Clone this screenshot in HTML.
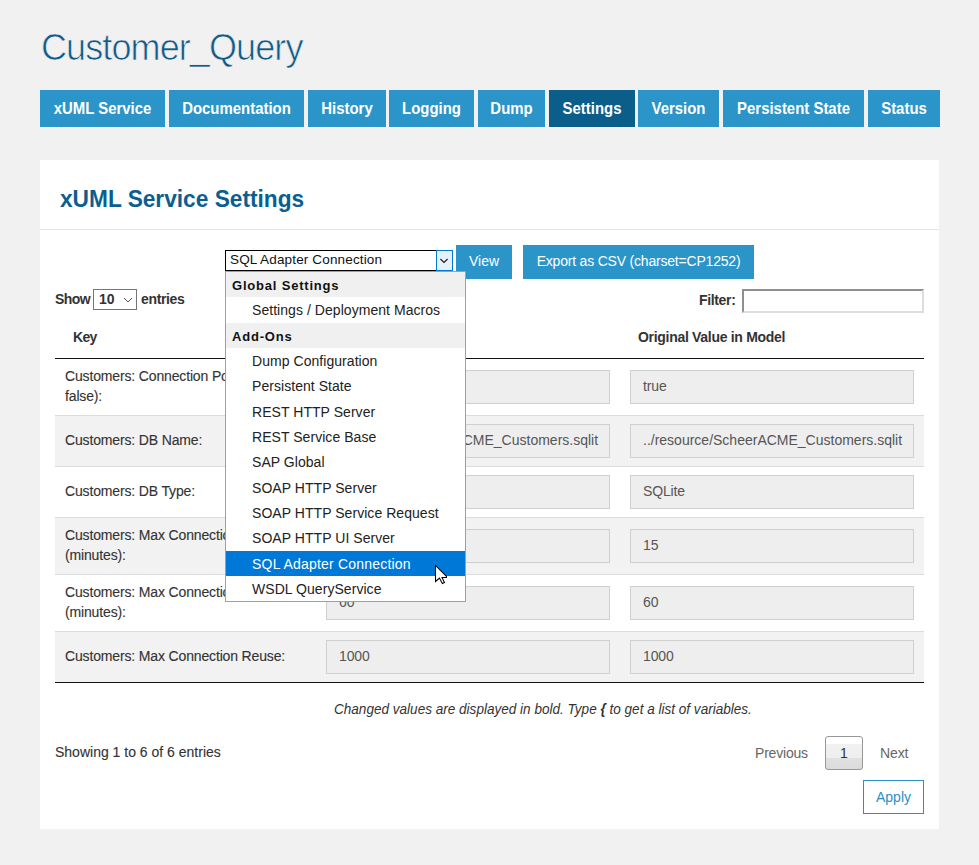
<!DOCTYPE html><html><head><meta charset="utf-8"><style>
html,body{margin:0;padding:0;}
body{width:979px;height:865px;background:#f1f1f1;position:relative;overflow:hidden;font-family:"Liberation Sans",sans-serif;}
.t{position:absolute;white-space:nowrap;}
.e{-webkit-text-stroke:0.12px currentColor;}
.r{position:absolute;box-sizing:border-box;}
</style></head><body>
<div class="t " style="left:41px;top:29.52px;font-size:36px;line-height:36px;font-weight:normal;color:#105b88;font-style:normal;letter-spacing:-0.9px;-webkit-text-stroke:0.7px #f1f1f1;paint-order:normal;">Customer_Query</div>
<div class="r" style="left:40px;top:90px;width:125px;height:37px;background:#2b94c9;"></div>
<div class="t " style="left:40px;top:100.03px;font-size:16.5px;line-height:16.5px;font-weight:bold;color:#fff;font-style:normal;width:125px;text-align:center;transform:scaleX(0.905);transform-origin:center top;">xUML Service</div>
<div class="r" style="left:169px;top:90px;width:135px;height:37px;background:#2b94c9;"></div>
<div class="t " style="left:169px;top:100.03px;font-size:16.5px;line-height:16.5px;font-weight:bold;color:#fff;font-style:normal;width:135px;text-align:center;transform:scaleX(0.905);transform-origin:center top;">Documentation</div>
<div class="r" style="left:308px;top:90px;width:78px;height:37px;background:#2b94c9;"></div>
<div class="t " style="left:308px;top:100.03px;font-size:16.5px;line-height:16.5px;font-weight:bold;color:#fff;font-style:normal;width:78px;text-align:center;transform:scaleX(0.905);transform-origin:center top;">History</div>
<div class="r" style="left:389px;top:90px;width:85px;height:37px;background:#2b94c9;"></div>
<div class="t " style="left:389px;top:100.03px;font-size:16.5px;line-height:16.5px;font-weight:bold;color:#fff;font-style:normal;width:85px;text-align:center;transform:scaleX(0.905);transform-origin:center top;">Logging</div>
<div class="r" style="left:478px;top:90px;width:67px;height:37px;background:#2b94c9;"></div>
<div class="t " style="left:478px;top:100.03px;font-size:16.5px;line-height:16.5px;font-weight:bold;color:#fff;font-style:normal;width:67px;text-align:center;transform:scaleX(0.905);transform-origin:center top;">Dump</div>
<div class="r" style="left:549px;top:90px;width:86px;height:37px;background:#0b5e8a;"></div>
<div class="t " style="left:549px;top:100.03px;font-size:16.5px;line-height:16.5px;font-weight:bold;color:#fff;font-style:normal;width:86px;text-align:center;transform:scaleX(0.905);transform-origin:center top;">Settings</div>
<div class="r" style="left:638px;top:90px;width:81px;height:37px;background:#2b94c9;"></div>
<div class="t " style="left:638px;top:100.03px;font-size:16.5px;line-height:16.5px;font-weight:bold;color:#fff;font-style:normal;width:81px;text-align:center;transform:scaleX(0.905);transform-origin:center top;">Version</div>
<div class="r" style="left:723px;top:90px;width:141px;height:37px;background:#2b94c9;"></div>
<div class="t " style="left:723px;top:100.03px;font-size:16.5px;line-height:16.5px;font-weight:bold;color:#fff;font-style:normal;width:141px;text-align:center;transform:scaleX(0.905);transform-origin:center top;">Persistent State</div>
<div class="r" style="left:868px;top:90px;width:72px;height:37px;background:#2b94c9;"></div>
<div class="t " style="left:868px;top:100.03px;font-size:16.5px;line-height:16.5px;font-weight:bold;color:#fff;font-style:normal;width:72px;text-align:center;transform:scaleX(0.905);transform-origin:center top;">Status</div>
<div class="r" style="left:40px;top:160px;width:899px;height:669px;background:#fff;"></div>
<div class="t " style="left:60px;top:187.38px;font-size:24px;line-height:24px;font-weight:bold;color:#0b5f8f;font-style:normal;transform:scaleX(0.945);transform-origin:left top;">xUML Service Settings</div>
<div class="r" style="left:40px;top:229px;width:899px;height:1px;background:#e3e3e3;"></div>
<div class="r" style="left:456px;top:245px;width:56px;height:34px;background:#2b94c9;"></div>
<div class="t " style="left:456px;top:254.15px;font-size:14px;line-height:14px;font-weight:normal;color:#fff;font-style:normal;width:56px;text-align:center;">View</div>
<div class="r" style="left:523px;top:245px;width:231px;height:34px;background:#2b94c9;"></div>
<div class="t " style="left:523px;top:254.15px;font-size:14px;line-height:14px;font-weight:normal;color:#fff;font-style:normal;letter-spacing:-0.2px;width:231px;text-align:center;">Export as CSV (charset=CP1252)</div>
<div class="t " style="left:55px;top:292.15px;font-size:14px;line-height:14px;font-weight:bold;color:#333;font-style:normal;letter-spacing:-0.6px;">Show</div>
<div class="r" style="left:93px;top:289px;width:44px;height:21px;border:1px solid #767676;background:#fff;"></div>
<div class="t " style="left:99px;top:292.15px;font-size:14px;line-height:14px;font-weight:bold;color:#333;font-style:normal;">10</div>
<svg class="r" style="left:123px;top:297px;width:10px;height:6px;" viewBox="0 0 10 6"><path d="M1 1 L5 5 L9 1" fill="none" stroke="#555" stroke-width="1"/></svg>
<div class="t " style="left:141px;top:292.15px;font-size:14px;line-height:14px;font-weight:bold;color:#333;font-style:normal;letter-spacing:-0.35px;">entries</div>
<div class="t " style="left:699px;top:293.15px;font-size:14px;line-height:14px;font-weight:bold;color:#333;font-style:normal;letter-spacing:-0.35px;">Filter:</div>
<div class="r" style="left:742px;top:289px;width:182px;height:24px;border:2px solid;border-color:#8f8f8f #dddddd #dddddd #8f8f8f;background:#fff;"></div>
<div class="t " style="left:73px;top:329.65px;font-size:14px;line-height:14px;font-weight:bold;color:#333;font-style:normal;letter-spacing:-0.7px;">Key</div>
<div class="t " style="left:334px;top:329.65px;font-size:14px;line-height:14px;font-weight:bold;color:#333;font-style:normal;">Value</div>
<div class="t " style="left:638px;top:329.65px;font-size:14px;line-height:14px;font-weight:bold;color:#333;font-style:normal;letter-spacing:-0.3px;">Original Value in Model</div>
<div class="r" style="left:55px;top:358px;width:869px;height:1px;background:#111;"></div>
<div class="t e" style="left:65px;top:369.15px;font-size:14px;line-height:14px;font-weight:normal;color:#333;font-style:normal;letter-spacing:-0.15px;">Customers: Connection Pooling (true/</div>
<div class="t e" style="left:65px;top:389.15px;font-size:14px;line-height:14px;font-weight:normal;color:#333;font-style:normal;letter-spacing:-0.15px;">false):</div>
<div class="r" style="left:326px;top:370px;width:284px;height:34px;background:#eee;border:1px solid #cfcfcf;"></div>
<div class="t " style="left:339px;top:379.15px;font-size:14px;line-height:14px;font-weight:normal;color:#555;font-style:normal;letter-spacing:-0.15px;">true</div>
<div class="r" style="left:630px;top:370px;width:284px;height:34px;background:#eee;border:1px solid #cfcfcf;"></div>
<div class="t " style="left:643px;top:379.15px;font-size:14px;line-height:14px;font-weight:normal;color:#555;font-style:normal;letter-spacing:-0.15px;">true</div>
<div class="r" style="left:55px;top:415px;width:869px;height:51px;background:#f2f2f2;"></div>
<div class="r" style="left:55px;top:415px;width:869px;height:1px;background:#dcdcdc;"></div>
<div class="t e" style="left:65px;top:433.15px;font-size:14px;line-height:14px;font-weight:normal;color:#333;font-style:normal;letter-spacing:-0.15px;">Customers: DB Name:</div>
<div class="r" style="left:326px;top:424px;width:284px;height:34px;background:#eee;border:1px solid #cfcfcf;"></div>
<div class="t " style="left:339px;top:433.15px;font-size:14px;line-height:14px;font-weight:normal;color:#555;font-style:normal;">../resource/ScheerACME_Customers.sqlit</div>
<div class="r" style="left:630px;top:424px;width:284px;height:34px;background:#eee;border:1px solid #cfcfcf;"></div>
<div class="t " style="left:643px;top:433.15px;font-size:14px;line-height:14px;font-weight:normal;color:#555;font-style:normal;">../resource/ScheerACME_Customers.sqlit</div>
<div class="r" style="left:55px;top:466px;width:869px;height:1px;background:#dcdcdc;"></div>
<div class="t e" style="left:65px;top:484.15px;font-size:14px;line-height:14px;font-weight:normal;color:#333;font-style:normal;letter-spacing:-0.15px;">Customers: DB Type:</div>
<div class="r" style="left:326px;top:475px;width:284px;height:34px;background:#eee;border:1px solid #cfcfcf;"></div>
<div class="t " style="left:339px;top:484.15px;font-size:14px;line-height:14px;font-weight:normal;color:#555;font-style:normal;letter-spacing:-0.15px;">SQLite</div>
<div class="r" style="left:630px;top:475px;width:284px;height:34px;background:#eee;border:1px solid #cfcfcf;"></div>
<div class="t " style="left:643px;top:484.15px;font-size:14px;line-height:14px;font-weight:normal;color:#555;font-style:normal;letter-spacing:-0.15px;">SQLite</div>
<div class="r" style="left:55px;top:517px;width:869px;height:57px;background:#f2f2f2;"></div>
<div class="r" style="left:55px;top:517px;width:869px;height:1px;background:#dcdcdc;"></div>
<div class="t e" style="left:65px;top:528.15px;font-size:14px;line-height:14px;font-weight:normal;color:#333;font-style:normal;letter-spacing:-0.15px;">Customers: Max Connection Idle Time</div>
<div class="t e" style="left:65px;top:548.15px;font-size:14px;line-height:14px;font-weight:normal;color:#333;font-style:normal;letter-spacing:-0.15px;">(minutes):</div>
<div class="r" style="left:326px;top:529px;width:284px;height:34px;background:#eee;border:1px solid #cfcfcf;"></div>
<div class="t " style="left:339px;top:538.15px;font-size:14px;line-height:14px;font-weight:normal;color:#555;font-style:normal;letter-spacing:-0.15px;">15</div>
<div class="r" style="left:630px;top:529px;width:284px;height:34px;background:#eee;border:1px solid #cfcfcf;"></div>
<div class="t " style="left:643px;top:538.15px;font-size:14px;line-height:14px;font-weight:normal;color:#555;font-style:normal;letter-spacing:-0.15px;">15</div>
<div class="r" style="left:55px;top:574px;width:869px;height:1px;background:#dcdcdc;"></div>
<div class="t e" style="left:65px;top:585.15px;font-size:14px;line-height:14px;font-weight:normal;color:#333;font-style:normal;letter-spacing:-0.15px;">Customers: Max Connection Lifetime</div>
<div class="t e" style="left:65px;top:605.15px;font-size:14px;line-height:14px;font-weight:normal;color:#333;font-style:normal;letter-spacing:-0.15px;">(minutes):</div>
<div class="r" style="left:326px;top:586px;width:284px;height:34px;background:#eee;border:1px solid #cfcfcf;"></div>
<div class="t " style="left:339px;top:595.15px;font-size:14px;line-height:14px;font-weight:normal;color:#555;font-style:normal;letter-spacing:-0.15px;">60</div>
<div class="r" style="left:630px;top:586px;width:284px;height:34px;background:#eee;border:1px solid #cfcfcf;"></div>
<div class="t " style="left:643px;top:595.15px;font-size:14px;line-height:14px;font-weight:normal;color:#555;font-style:normal;letter-spacing:-0.15px;">60</div>
<div class="r" style="left:55px;top:631px;width:869px;height:51px;background:#f2f2f2;"></div>
<div class="r" style="left:55px;top:631px;width:869px;height:1px;background:#dcdcdc;"></div>
<div class="t e" style="left:65px;top:649.15px;font-size:14px;line-height:14px;font-weight:normal;color:#333;font-style:normal;letter-spacing:-0.15px;">Customers: Max Connection Reuse:</div>
<div class="r" style="left:326px;top:640px;width:284px;height:34px;background:#eee;border:1px solid #cfcfcf;"></div>
<div class="t " style="left:339px;top:649.15px;font-size:14px;line-height:14px;font-weight:normal;color:#555;font-style:normal;letter-spacing:-0.15px;">1000</div>
<div class="r" style="left:630px;top:640px;width:284px;height:34px;background:#eee;border:1px solid #cfcfcf;"></div>
<div class="t " style="left:643px;top:649.15px;font-size:14px;line-height:14px;font-weight:normal;color:#555;font-style:normal;letter-spacing:-0.15px;">1000</div>
<div class="r" style="left:55px;top:682px;width:869px;height:1px;background:#111;"></div>
<div class="t " style="left:334px;top:701.65px;font-size:14px;line-height:14px;font-weight:normal;color:#333;font-style:italic;transform:scaleX(0.968);transform-origin:left top;">Changed values are displayed in bold. Type <b>{</b> to get a list of variables.</div>
<div class="t e" style="left:55px;top:745.15px;font-size:14px;line-height:14px;font-weight:normal;color:#333;font-style:normal;">Showing 1 to 6 of 6 entries</div>
<div class="t " style="left:755px;top:746.15px;font-size:14px;line-height:14px;font-weight:normal;color:#666;font-style:normal;letter-spacing:-0.2px;">Previous</div>
<div class="r" style="left:825px;top:736px;width:38px;height:34px;border:1px solid #979797;border-radius:3px;background:linear-gradient(#fff 0%,#fff 23%,#f1f1f1 23%,#eeeeee 66%,#e0e0e0 66%,#dcdcdc 100%);"></div>
<div class="t " style="left:825px;top:746.15px;font-size:14px;line-height:14px;font-weight:normal;color:#333;font-style:normal;width:38px;text-align:center;">1</div>
<div class="t " style="left:880px;top:746.15px;font-size:14px;line-height:14px;font-weight:normal;color:#666;font-style:normal;letter-spacing:-0.1px;">Next</div>
<div class="r" style="left:863px;top:780px;width:61px;height:34px;border:1px solid #2b8fc7;background:#fff;"></div>
<div class="t " style="left:863px;top:790.15px;font-size:14px;line-height:14px;font-weight:normal;color:#2b8fc7;font-style:normal;width:61px;text-align:center;">Apply</div>
<div class="r" style="left:225px;top:250px;width:228px;height:21px;border:1px solid #000;background:#fff;"></div>
<div class="t " style="left:230px;top:253.27px;font-size:13.5px;line-height:13.5px;font-weight:normal;color:#111;font-style:normal;letter-spacing:0.15px;">SQL Adapter Connection</div>
<div class="r" style="left:436px;top:250px;width:17px;height:21px;border:1px solid #0078d7;background:#e5f1fb;"></div>
<svg class="r" style="left:439px;top:257px;width:11px;height:7px;" viewBox="0 0 11 7"><path d="M1.4 2 L5 5.5 L8.6 2" fill="none" stroke="#1a1a1a" stroke-width="1.05"/></svg>
<div class="r" style="left:225px;top:271px;width:241px;height:331px;border:1px solid #a0a0a0;background:#fff;"></div>
<div class="r" style="left:226px;top:272px;width:239px;height:25px;background:#f0f0f0;"></div>
<div class="t " style="left:232px;top:278.59px;font-size:13px;line-height:13px;font-weight:bold;color:#111;font-style:normal;letter-spacing:0.8px;">Global Settings</div>
<div class="t " style="left:252px;top:302.55px;font-size:14px;line-height:14px;font-weight:normal;color:#222;font-style:normal;letter-spacing:0.05px;">Settings / Deployment Macros</div>
<div class="r" style="left:226px;top:323px;width:239px;height:25px;background:#f0f0f0;"></div>
<div class="t " style="left:232px;top:329.59px;font-size:13px;line-height:13px;font-weight:bold;color:#111;font-style:normal;letter-spacing:0.8px;">Add-Ons</div>
<div class="t " style="left:252px;top:353.55px;font-size:14px;line-height:14px;font-weight:normal;color:#222;font-style:normal;letter-spacing:0.05px;">Dump Configuration</div>
<div class="t " style="left:252px;top:378.55px;font-size:14px;line-height:14px;font-weight:normal;color:#222;font-style:normal;letter-spacing:0.05px;">Persistent State</div>
<div class="t " style="left:252px;top:404.55px;font-size:14px;line-height:14px;font-weight:normal;color:#222;font-style:normal;letter-spacing:0.05px;">REST HTTP Server</div>
<div class="t " style="left:252px;top:429.55px;font-size:14px;line-height:14px;font-weight:normal;color:#222;font-style:normal;letter-spacing:0.05px;">REST Service Base</div>
<div class="t " style="left:252px;top:454.55px;font-size:14px;line-height:14px;font-weight:normal;color:#222;font-style:normal;letter-spacing:0.05px;">SAP Global</div>
<div class="t " style="left:252px;top:480.55px;font-size:14px;line-height:14px;font-weight:normal;color:#222;font-style:normal;letter-spacing:0.05px;">SOAP HTTP Server</div>
<div class="t " style="left:252px;top:505.55px;font-size:14px;line-height:14px;font-weight:normal;color:#222;font-style:normal;letter-spacing:0.05px;">SOAP HTTP Service Request</div>
<div class="t " style="left:252px;top:530.55px;font-size:14px;line-height:14px;font-weight:normal;color:#222;font-style:normal;letter-spacing:0.05px;">SOAP HTTP UI Server</div>
<div class="r" style="left:226px;top:551px;width:239px;height:25px;background:#0078d7;"></div>
<div class="t " style="left:252px;top:556.55px;font-size:14px;line-height:14px;font-weight:normal;color:#fff;font-style:normal;letter-spacing:0.2px;">SQL Adapter Connection</div>
<div class="t " style="left:252px;top:581.55px;font-size:14px;line-height:14px;font-weight:normal;color:#222;font-style:normal;letter-spacing:0.05px;">WSDL QueryService</div>
<svg class="r" style="left:435px;top:565px;width:14px;height:21px;overflow:visible" viewBox="0 0 14 21"><path d="M0.5 0.5 L11.5 11.5 L11.5 12.5 L7 12.5 L9.5 17.6 L7.4 18.5 L4.4 13 L0.5 16.5 Z" fill="#fff" stroke="#000" stroke-width="1.05" stroke-linejoin="miter"/></svg>
</body></html>
